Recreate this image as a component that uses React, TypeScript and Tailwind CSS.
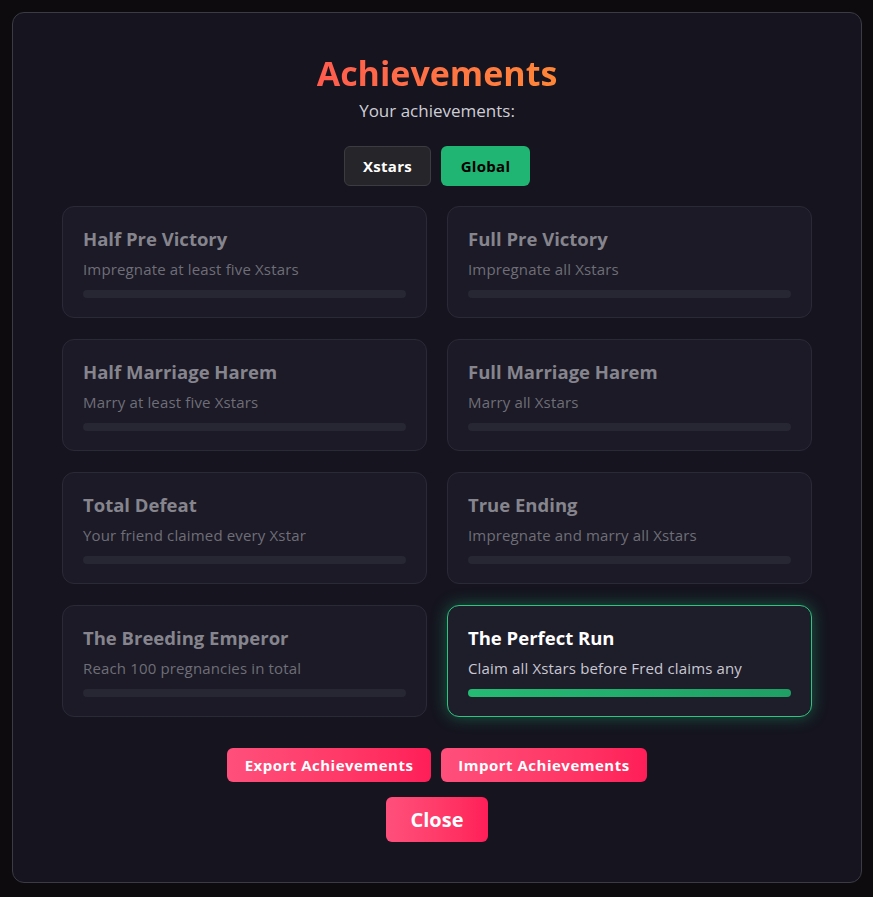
import { useState } from "react";

type Achievement = {
  id: string;
  title: string;
  description: string;
  unlocked: boolean;
};

const achievements: Achievement[] = [
  { id: "half-pre", title: "Half Pre Victory", description: "Impregnate at least five Xstars", unlocked: false },
  { id: "full-pre", title: "Full Pre Victory", description: "Impregnate all Xstars", unlocked: false },
  { id: "half-harem", title: "Half Marriage Harem", description: "Marry at least five Xstars", unlocked: false },
  { id: "full-harem", title: "Full Marriage Harem", description: "Marry all Xstars", unlocked: false },
  { id: "defeat", title: "Total Defeat", description: "Your friend claimed every Xstar", unlocked: false },
  { id: "true-ending", title: "True Ending", description: "Impregnate and marry all Xstars", unlocked: false },
  { id: "emperor", title: "The Breeding Emperor", description: "Reach 100 pregnancies in total", unlocked: false },
  { id: "perfect", title: "The Perfect Run", description: "Claim all Xstars before Fred claims any", unlocked: true },
];

function AchievementCard({ a }: { a: Achievement }) {
  if (a.unlocked) {
    return (
      <div className="h-[112px] rounded-xl border border-[#2fc47f] bg-[#1e1d2a] px-5 pt-5 shadow-[0_0_16px_rgba(34,197,122,0.4)]">
        <div className="text-[18.5px] font-bold leading-6 text-white">{a.title}</div>
        <div className="mt-2 text-[15px] leading-5 tracking-[0.15px] text-[#c9c8d2]">{a.description}</div>
        <div className="mt-[11px] h-2 rounded-full bg-gradient-to-r from-[#25bb74] to-[#1f9f64]" />
      </div>
    );
  }
  return (
    <div className="h-[112px] rounded-xl border border-[#2a2936] bg-[#1b1a26] px-5 pt-5">
      <div className="text-[18.5px] font-bold leading-6 text-[#86858e]">{a.title}</div>
      <div className="mt-2 text-[15px] leading-5 tracking-[0.15px] text-[#6f6e78]">{a.description}</div>
      <div className="mt-[11px] h-2 rounded-full bg-[#272633]" />
    </div>
  );
}

export default function App() {
  const [tab, setTab] = useState<"xstars" | "global">("global");

  return (
    <div
      className="min-h-[897px] bg-[#0d0b0e] pl-3 pt-3"
      style={{ fontFamily: '"Open Sans", "Liberation Sans", sans-serif' }}
    >
      <div className="flex h-[871px] w-[850px] flex-col items-center rounded-xl border border-[#3b3a45] bg-[#15141f] px-[49px] pt-10">
        <h1 className="bg-gradient-to-r from-[#ff5b4e] to-[#ff8636] bg-clip-text text-[34px] font-bold leading-[40px] text-transparent">
          Achievements
        </h1>
        <p className="mt-[6px] text-[17px] leading-6 text-[#cfced6]">Your achievements:</p>

        <div className="mt-[23px] flex gap-[10px]">
          <button
            onClick={() => setTab("xstars")}
            className={
              tab === "xstars"
                ? "h-10 w-[87px] rounded-md bg-[#21b573] text-[15px] font-bold tracking-[0.3px] text-black"
                : "h-10 w-[87px] rounded-md border border-[#3c3b42] bg-[#262529] text-[15px] font-bold tracking-[0.3px] text-white"
            }
          >
            Xstars
          </button>
          <button
            onClick={() => setTab("global")}
            className={
              tab === "global"
                ? "h-10 w-[89px] rounded-md bg-[#21b573] text-[15px] font-bold tracking-[0.3px] text-black"
                : "h-10 w-[89px] rounded-md border border-[#3c3b42] bg-[#262529] text-[15px] font-bold tracking-[0.3px] text-white"
            }
          >
            Global
          </button>
        </div>

        <div className="mt-5 grid w-full grid-cols-2 gap-x-5 gap-y-[21px]">
          {achievements.map((a) => (
            <AchievementCard key={a.id} a={a} />
          ))}
        </div>

        <div className="mt-[31px] flex gap-[10px]">
          <button className="h-[34px] w-[204px] rounded-md bg-gradient-to-r from-[#ff4f7b] to-[#ff1d58] text-[15px] font-bold tracking-[0.5px] text-white">
            Export Achievements
          </button>
          <button className="h-[34px] w-[206px] rounded-md bg-gradient-to-r from-[#ff4f7b] to-[#ff1d58] text-[15px] font-bold tracking-[0.5px] text-white">
            Import Achievements
          </button>
        </div>
        <button className="mt-[15px] h-[45px] w-[102px] rounded-md bg-gradient-to-r from-[#ff4f7b] to-[#ff1d58] text-[20px] font-bold text-white">
          Close
        </button>
      </div>
    </div>
  );
}
